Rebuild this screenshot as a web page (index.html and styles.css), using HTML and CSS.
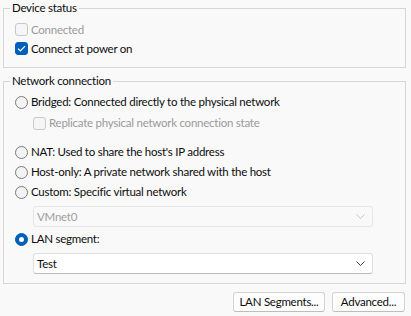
FILE: index.html
```html
<!DOCTYPE html>
<html>
<head>
<meta charset="utf-8">
<link rel="stylesheet" href="styles.css">
</head>
<body>
<div class="page">
  <fieldset class="group g1">
    <legend>Device status</legend>
    <div class="body b1">
      <div class="row disabled"><span class="cb"></span><span class="lbl">Connected</span></div>
      <div class="row"><span class="cb checked"><svg width="9" height="7" viewBox="0 0 9 7"><path d="M1 3.6 L3.4 5.8 L8 1.2" fill="none" stroke="#fff" stroke-width="1.2"/></svg></span><span class="lbl">Connect at power on</span></div>
    </div>
  </fieldset>
  <fieldset class="group g2">
    <legend>Network connection</legend>
    <div class="body b2">
      <div class="row r-bridged"><span class="rb"></span><span class="lbl">Bridged: Connected directly to the physical network</span></div>
      <div class="row r-repl indent disabled"><span class="cb"></span><span class="lbl">Replicate physical network connection state</span></div>
      <div class="row r-nat"><span class="rb"></span><span class="lbl">NAT: Used to share the host's IP address</span></div>
      <div class="row"><span class="rb"></span><span class="lbl">Host-only: A private network shared with the host</span></div>
      <div class="row"><span class="rb"></span><span class="lbl">Custom: Specific virtual network</span></div>
      <div class="combo disabled c-vm"><span class="val">VMnet0</span><svg width="9" height="5" viewBox="0 0 9 5"><path d="M0.5 0.5 L4.5 4.5 L8.5 0.5" fill="none" stroke="#c4c4c4" stroke-width="1"/></svg></div>
      <div class="row r-lan"><span class="rb on"><span class="dot"></span></span><span class="lbl">LAN segment:</span></div>
      <div class="combo c-test"><span class="val">Test</span><svg width="9" height="5" viewBox="0 0 9 5"><path d="M0.5 0.5 L4.5 4.5 L8.5 0.5" fill="none" stroke="#404040" stroke-width="1"/></svg></div>
    </div>
  </fieldset>
  <div class="buttons">
    <button class="btn b-lan">LAN Segments...</button>
    <button class="btn b-adv">Advanced...</button>
  </div>
</div>
</body>
</html>
```

FILE: styles.css
```css
html, body {
  margin: 0;
  padding: 0;
  background: #f9f9f9;
}
body {
  font-family: "Lato", "Liberation Sans", sans-serif;
  font-size: 11.5px;
  letter-spacing: -0.25px;
  color: #0c0c0c;
  width: 411px;
  height: 316px;
  overflow: hidden;
}
.page {
  padding: 0 5px 0 3px;
}
.group {
  margin: 0;
  padding: 0;
  border: 1px solid #d6d6d6;
  min-width: 0;
}
.group legend {
  margin-left: 6px;
  padding: 0 2px;
  line-height: 16px;
  height: 16px;
  color: #0c0c0c;
}
.g2 {
  margin-top: 5px;
}
.body {
  padding-left: 11px;
}
.b1 {
  padding-top: 4px;
  padding-bottom: 9px;
}
.b2 {
  padding-top: 3px;
  padding-bottom: 9px;
}
.row {
  display: flex;
  align-items: center;
  height: 19px;
  white-space: nowrap;
}
.b2 .row {
  height: 20px;
}
.row.indent {
  padding-left: 18px;
}
.r-repl { margin-top: 1px; }
.r-nat { margin-top: 9px; }
.r-lan { margin-top: 2px; }
.lbl {
  margin-left: 3px;
  line-height: 16px;
}
.disabled .lbl {
  color: #9a9a9a;
}
.cb {
  box-sizing: border-box;
  width: 13px;
  height: 13px;
  border: 1px solid #8d8d8d;
  border-radius: 3px;
  background: #f6f6f6;
  display: flex;
  align-items: center;
  justify-content: center;
  flex: none;
}
.disabled .cb {
  border-color: #c8c8c8;
  background: #f6f6f6;
}
.cb.checked {
  background: #005fb8;
  border-color: #005fb8;
}
.rb {
  box-sizing: border-box;
  width: 13px;
  height: 13px;
  border: 1px solid #7a7a7a;
  border-radius: 50%;
  background: #f3f3f3;
  display: flex;
  align-items: center;
  justify-content: center;
  flex: none;
}
.rb.on {
  background: #005fb8;
  border-color: #005fb8;
}
.rb .dot {
  width: 5px;
  height: 5px;
  border-radius: 50%;
  background: #fff;
}
.combo {
  box-sizing: border-box;
  margin-left: 18px;
  width: 340px;
  height: 21px;
  border: 1px solid #dedede;
  border-bottom-color: #bcbcbc;
  border-radius: 3px;
  background: #ffffff;
  display: flex;
  align-items: center;
  justify-content: space-between;
  padding: 0 7px 0 3px;
}
.combo.disabled {
  background: #f9f9f9;
  border-color: #e6e6e6;
}
.combo.disabled .val {
  color: #a0a0a0;
}
.c-vm { margin-top: 4px; }
.c-test { margin-top: 4px; }
.buttons {
  display: flex;
  justify-content: flex-end;
  gap: 7px;
  margin-top: 8px;
  padding-right: 1px;
}
.btn {
  box-sizing: border-box;
  height: 20px;
  border: 1px solid #d3d3d3;
  border-bottom-color: #bdbdbd;
  border-radius: 3px;
  background: #fdfdfd;
  font-family: inherit;
  font-size: inherit;
  letter-spacing: inherit;
  color: #0c0c0c;
  padding: 0;
  line-height: 16px;
  white-space: nowrap;
}
.b-lan { width: 92px; }
.b-adv { width: 73px; }
```
